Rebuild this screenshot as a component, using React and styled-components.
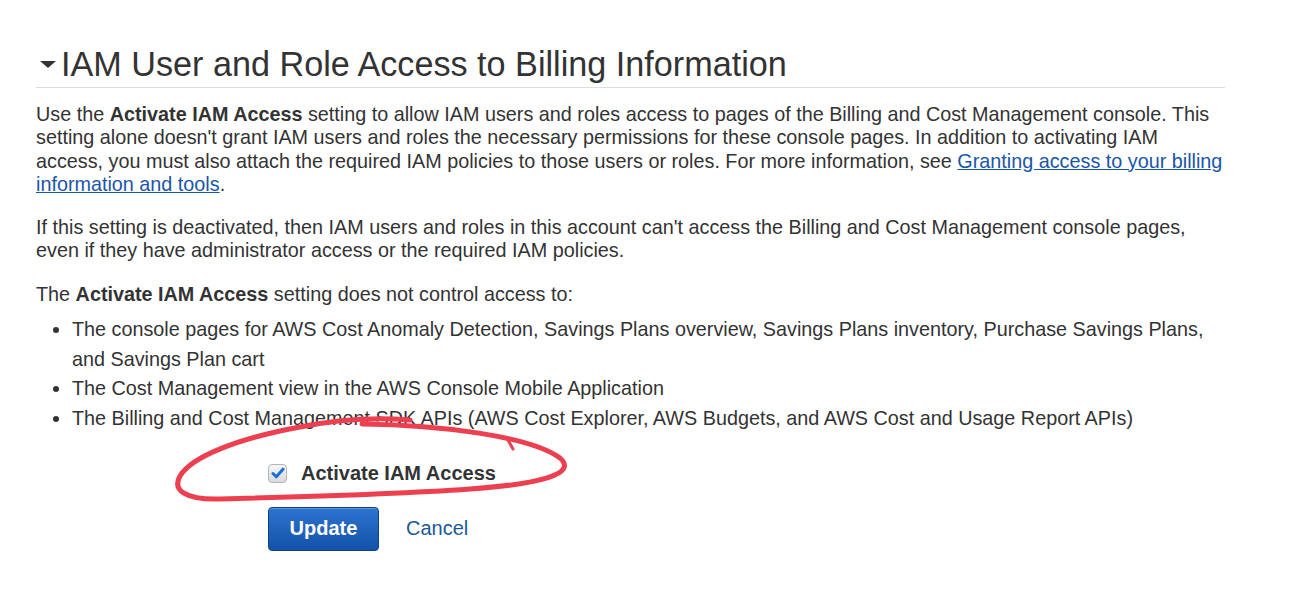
import React from "react";
import styled, { createGlobalStyle } from "styled-components";

const GlobalStyle = createGlobalStyle`
  body {
    margin: 0;
    background: #ffffff;
    font-family: "Liberation Sans", Arial, sans-serif;
    color: #333333;
  }
`;

const Page = styled.div`
  position: relative;
  width: 1291px;
  height: 609px;
  padding: 44px 0 0 36px;
  box-sizing: border-box;
  overflow: hidden;
`;

const Section = styled.section`
  width: 1189px;
`;

const Heading = styled.h2`
  display: flex;
  align-items: center;
  margin: 0;
  padding: 0 0 3px 4px;
  font-size: 34.2px;
  font-weight: 400;
  line-height: 40px;
  color: #333333;
  border-bottom: 1px solid #dddddd;
`;

const Caret = styled.span`
  width: 0;
  height: 0;
  margin: 0 5px 0 0;
  border-left: 8px solid transparent;
  border-right: 8px solid transparent;
  border-top: 7px solid #333333;
`;

const Body = styled.div`
  width: 1230px;
  padding-top: 15px;
  font-size: 19.8px;
  line-height: 23.3px;
  white-space: nowrap;
  p {
    margin: 0 0 20px;
  }
  b {
    font-weight: 700;
  }
  a {
    color: #1a56a8;
    text-decoration: underline;
  }
`;

const Lead = styled.p`
  && {
    margin-bottom: 0;
  }
`;

const List = styled.ul`
  margin: 9px 0 0;
  padding-left: 36px;
  list-style: disc;
  li {
    line-height: 29.7px;
  }
`;

const Form = styled.div`
  display: flex;
  flex-direction: column;
  gap: 22px;
  margin: 28px 0 0 232px;
`;

const CheckRow = styled.label`
  display: flex;
  align-items: center;
  gap: 14px;
  font-size: 20px;
  font-weight: 700;
  color: #333333;
`;

const Box = styled.span`
  display: flex;
  align-items: center;
  justify-content: center;
  width: 19px;
  height: 19px;
  border: 1px solid #b5b5b5;
  border-radius: 4px;
  background: linear-gradient(#f6f6f6, #dadada);
  box-sizing: border-box;
`;

const Actions = styled.div`
  display: flex;
  align-items: center;
  gap: 27px;
`;

const Button = styled.button`
  width: 111px;
  height: 44px;
  border: 1px solid #0f3f88;
  border-radius: 4px;
  background: linear-gradient(#2c74d0, #1452a8);
  color: #ffffff;
  font-family: "Liberation Sans", Arial, sans-serif;
  font-size: 20px;
  font-weight: 700;
  box-shadow: inset 0 1px 0 rgba(255, 255, 255, 0.25);
`;

const TextLink = styled.a`
  color: #1a5a96;
  font-size: 20px;
  text-decoration: none;
`;

const Scribble = styled.svg`
  position: absolute;
  left: 0;
  top: 0;
  pointer-events: none;
`;

const App = () => {
  return (
    <Page>
      <GlobalStyle />
      <Section>
        <Heading>
          <Caret />
          IAM User and Role Access to Billing Information
        </Heading>
        <Body>
          <p>
            Use the <b>Activate IAM Access</b> setting to allow IAM users and roles
            access to pages of the Billing and Cost Management console. This
            <br />
            setting alone doesn't grant IAM users and roles the necessary permissions
            for these console pages. In addition to activating IAM
            <br />
            access, you must also attach the required IAM policies to those users or
            roles. For more information, see{" "}
            <a href="#">
              Granting access to your billing
              <br />
              information and tools
            </a>
            .
          </p>
          <p>
            If this setting is deactivated, then IAM users and roles in this account
            can't access the Billing and Cost Management console pages,
            <br />
            even if they have administrator access or the required IAM policies.
          </p>
          <Lead>
            The <b>Activate IAM Access</b> setting does not control access to:
          </Lead>
          <List>
            <li>
              The console pages for AWS Cost Anomaly Detection, Savings Plans overview,
              Savings Plans inventory, Purchase Savings Plans,
              <br />
              and Savings Plan cart
            </li>
            <li>The Cost Management view in the AWS Console Mobile Application</li>
            <li>
              The Billing and Cost Management SDK APIs (AWS Cost Explorer, AWS Budgets,
              and AWS Cost and Usage Report APIs)
            </li>
          </List>
        </Body>
        <Form>
          <CheckRow>
            <Box>
              <svg width="14" height="12" viewBox="0 0 14 12">
                <path
                  d="M2 6.5 L5.3 9.8 L12 2.2"
                  fill="none"
                  stroke="#1a6fd0"
                  strokeWidth="3"
                  strokeLinecap="round"
                  strokeLinejoin="round"
                />
              </svg>
            </Box>
            Activate IAM Access
          </CheckRow>
          <Actions>
            <Button>Update</Button>
            <TextLink href="#">Cancel</TextLink>
          </Actions>
        </Form>
      </Section>
      <Scribble width="1291" height="609" viewBox="0 0 1291 609">
        <path
          d="M362,424 C440,425 530,436 560,458 C578,474 540,484 470,489 C400,494 300,497 220,499 C185,500 172,490 180,476 C192,456 240,438 300,427 C335,420 375,417 410,420"
          fill="none"
          stroke="#ec4050"
          strokeWidth="5"
          strokeLinecap="round"
          strokeLinejoin="round"
        />
        <path d="M508,440 L513,449" stroke="#ec4050" strokeWidth="3" strokeLinecap="round" />
      </Scribble>
    </Page>
  );
};

export default App;
